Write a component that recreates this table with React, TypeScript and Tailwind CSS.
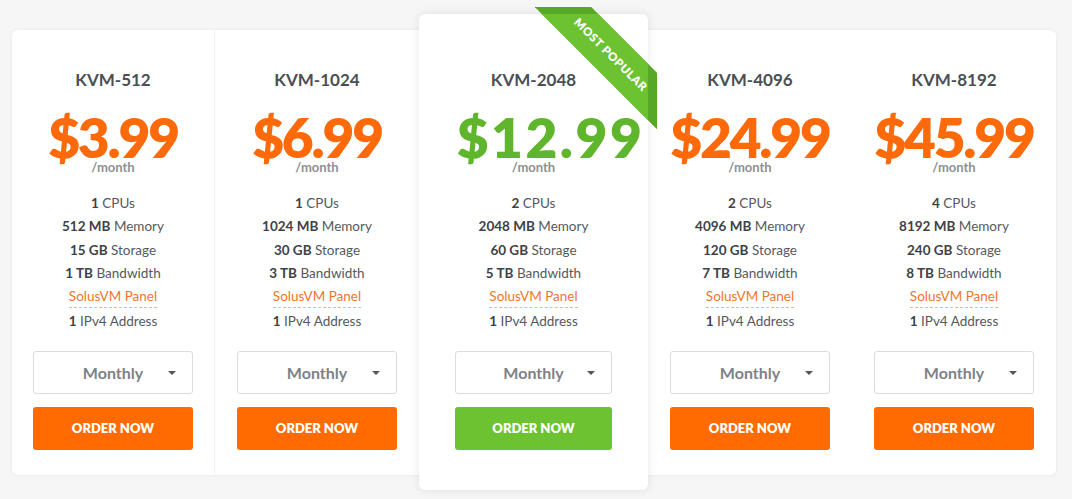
import React from "react";

type Plan = {
  name: string;
  price: string;
  cpu: string;
  mem: string;
  storage: string;
  bw: string;
  featured?: boolean;
};

const plans: Plan[] = [
  { name: "KVM-512", price: "$3.99", cpu: "1", mem: "512 MB", storage: "15 GB", bw: "1 TB" },
  { name: "KVM-1024", price: "$6.99", cpu: "1", mem: "1024 MB", storage: "30 GB", bw: "3 TB" },
  { name: "KVM-2048", price: "$12.99", cpu: "2", mem: "2048 MB", storage: "60 GB", bw: "5 TB", featured: true },
  { name: "KVM-4096", price: "$24.99", cpu: "2", mem: "4096 MB", storage: "120 GB", bw: "7 TB" },
  { name: "KVM-8192", price: "$45.99", cpu: "4", mem: "8192 MB", storage: "240 GB", bw: "8 TB" },
];

function Content({ p }: { p: Plan }) {
  const priceCls = p.featured
    ? "text-[#5fb52c] tracking-[2.5px] ml-[34px]"
    : "text-[#fe6a0a] tracking-[-2.2px]";
  const btnColor = p.featured ? "bg-[#6cc231]" : "bg-[#ff6b00]";
  return (
    <div className="flex flex-col items-center">
      <div className="text-[17px] leading-[24px] font-bold text-[#4b4f54]">{p.name}</div>
      <div className={`mt-[23px] text-[55px] leading-[44px] font-extrabold whitespace-nowrap ${priceCls}`}>
        {p.price}
      </div>
      <div className="mt-[1px] text-[13px] leading-[14px] font-bold text-[#8d9196]">/month</div>
      <div className="mt-[18px] flex flex-col items-center text-[13.5px] leading-[23.4px] text-[#55595e]">
        <div><b className="text-[#3e4246]">{p.cpu}</b> CPUs</div>
        <div><b className="text-[#3e4246]">{p.mem}</b> Memory</div>
        <div><b className="text-[#3e4246]">{p.storage}</b> Storage</div>
        <div><b className="text-[#3e4246]">{p.bw}</b> Bandwidth</div>
        <div className="text-[#f0762a] border-b border-dashed border-[#f4b58c] leading-[21px] mb-[2.4px]">SolusVM Panel</div>
        <div><b className="text-[#3e4246]">1</b> IPv4 Address</div>
      </div>
      <div className="mt-[18px] w-full h-[43px] rounded-[3px] border border-[#dcdcdc] bg-white relative flex items-center justify-center">
        <span className="text-[16px] font-bold text-[#7d8288]">Monthly</span>
        <span className="absolute right-[16px] top-[19px] w-0 h-0 border-l-[4px] border-r-[4px] border-t-[4px] border-l-transparent border-r-transparent border-t-[#555]" />
      </div>
      <div className={`mt-[13px] w-full h-[43px] rounded-[3px] ${btnColor} flex items-center justify-center text-white text-[13px] font-extrabold`}>
        ORDER NOW
      </div>
    </div>
  );
}

function Ribbon() {
  return (
    <>
      <div className="absolute top-[-7px] right-[-9px] w-[122px] h-[122px] overflow-hidden">
        <div className="absolute left-[-25px] top-[26.75px] w-[200px] h-[40px] rotate-45 bg-[#58a828]" />
      </div>
      <div className="absolute top-0 right-0 w-[113px] h-[115px] overflow-hidden rounded-tr-[6px]">
        <div className="absolute left-[-25px] top-[19.75px] w-[200px] h-[40px] rotate-45 bg-[#6cc231]" />
      </div>
      <div className="absolute top-[-7px] right-[-9px] w-[122px] h-[122px]">
        <div className="absolute left-[-25px] top-[26.75px] w-[200px] h-[40px] rotate-45 flex items-center justify-center">
          <span className="text-white text-[11.5px] font-extrabold tracking-[0.6px] pl-[2px]">MOST POPULAR</span>
        </div>
      </div>
    </>
  );
}

export default function App() {
  return (
    <div
      className="w-full h-[499px] bg-[#f6f6f6] pt-[30px] px-[12px]"
      style={{ fontFamily: "Lato, 'Open Sans', Arial, sans-serif" }}
    >
      <div className="flex w-[1044px] h-[445px] bg-white rounded-[6px] shadow-[0_0_4px_rgba(0,0,0,0.06)]">
        <div className="w-[203px] pt-[38px] px-[21px] border-r border-[#f1f1f1]">
          <Content p={plans[0]} />
        </div>
        <div className="w-[204px] pt-[38px] px-[22px]">
          <Content p={plans[1]} />
        </div>
        <div className="relative z-10 w-[229px] mt-[-16px] h-[476px] pt-[54px] px-[36px] bg-white rounded-[6px] shadow-[0_0_10px_rgba(0,0,0,0.1)]">
          <Ribbon />
          <Content p={plans[2]} />
        </div>
        <div className="w-[204px] pt-[38px] px-[22px]">
          <Content p={plans[3]} />
        </div>
        <div className="w-[204px] pt-[38px] px-[22px]">
          <Content p={plans[4]} />
        </div>
      </div>
    </div>
  );
}
